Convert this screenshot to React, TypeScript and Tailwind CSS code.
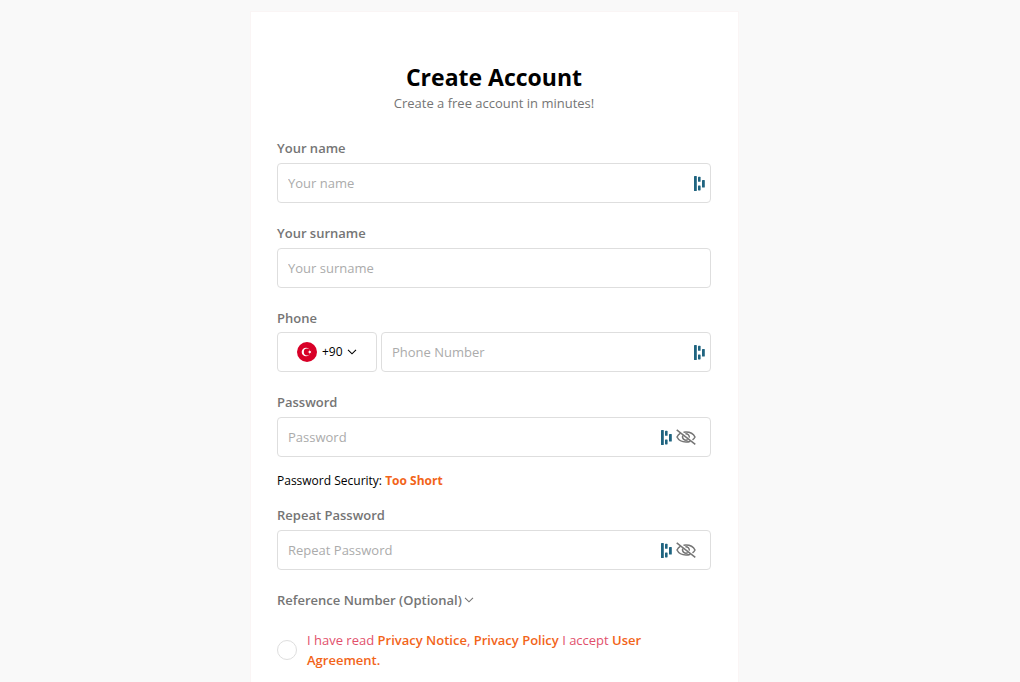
import { useState, type ReactNode } from 'react'

interface FieldProps {
  id: string
  label: string
  type?: string
  children?: ReactNode
}

const inputClass =
  'h-10 w-full min-w-0 rounded border border-[#dedede] bg-white px-[10px] text-[13px] text-black placeholder:text-[#ababab] outline-none focus:border-gray-400'
const labelClass = 'block text-[13px] leading-5 font-semibold text-[#757575]'

function ManagerIcon() {
  return (
    <svg width="11" height="15" viewBox="0 0 11 15" fill="#1f6480" aria-hidden="true">
      <rect x="0" y="0" width="2.8" height="15" rx="0.6" />
      <rect x="4" y="0.8" width="2.6" height="5" rx="0.6" />
      <rect x="4" y="9.4" width="2.6" height="5" rx="0.6" />
      <rect x="8" y="4" width="2.8" height="7.5" rx="0.6" />
    </svg>
  )
}

function EyeOffIcon() {
  return (
    <svg width="20" height="16" viewBox="0 0 20 16" fill="none" stroke="#757575" strokeWidth="1.5" aria-hidden="true">
      <path d="M4.6 4.2C3 5.1 1.7 6.600 1 8c1.600 3.200 5 5 9 5 1.600 0 3.100-.3 4.400-.8M7.500 3.200c.8-.1 1.600-.2 2.500-.2 4 0 7.400 1.800 9 5-.6 1.200-1.400 2.100-2.500 2.900" />
      <path d="M6.800 6.400A3.500 3.500 0 0 0 11.800 10.700M9.400 4.700A3.500 3.500 0 0 1 13.300 8.700" />
      <path d="M.7 .8 19.300 15.400" />
    </svg>
  )
}

function ChevronIcon() {
  return (
    <svg width="10" height="6" viewBox="0 0 10 6" fill="none" stroke="currentColor" strokeWidth="1.1" aria-hidden="true">
      <path d="M1 .8 5 4.800 9 .8" />
    </svg>
  )
}

function TurkeyFlag() {
  return (
    <svg width="20" height="20" viewBox="0 0 20 20" aria-hidden="true">
      <circle cx="10" cy="10" r="10" fill="#d80027" />
      <circle cx="9" cy="10" r="4.3" fill="#fff" />
      <circle cx="10.2" cy="10" r="3.4" fill="#d80027" />
      <path fill="#fff" d="m12 8.100.9 1.200 1.500-.5-.9 1.200.9 1.300-1.500-.5-.9 1.200v-1.500l-1.500-.5 1.500-.5z" />
    </svg>
  )
}

function Field({ id, label, type = 'text', children }: FieldProps) {
  return (
    <div>
      <label htmlFor={id} className={labelClass}>{label}</label>
      <div className="relative mt-[5px]">
        <input id={id} type={type} placeholder={label} className={inputClass} />
        {children}
      </div>
    </div>
  )
}

function PasswordField({ id, label }: FieldProps) {
  const [visible, setVisible] = useState(false)

  return (
    <Field id={id} label={label} type={visible ? 'text' : 'password'}>
      <div className="absolute inset-y-0 right-[15px] flex items-center gap-1">
        <ManagerIcon />
        <button type="button" aria-label="Toggle password visibility" onClick={() => setVisible(!visible)}>
          <EyeOffIcon />
        </button>
      </div>
    </Field>
  )
}

export default function App() {
  const [showReference, setShowReference] = useState(false)

  return (
    <div className="flex min-h-screen justify-center bg-[#f9f9f9] pt-[11px] pr-[31px] font-['Open_Sans',sans-serif]">
      <main className="w-full max-w-[489px] border border-b-0 border-[#faf5f5] bg-white pt-[49px] pr-[27px] pl-[26px]">
        <header className="text-center">
          <h1 className="text-[23px] leading-8 font-bold text-black">Create Account</h1>
          <p className="text-[13px] leading-5 text-[#757575]">Create a free account in minutes!</p>
        </header>

        <form className="mt-[25px]" onSubmit={(e) => e.preventDefault()}>
          <div className="flex flex-col gap-5">
            <Field id="name" label="Your name">
              <div className="absolute inset-y-0 right-[6px] flex items-center">
                <ManagerIcon />
              </div>
            </Field>

            <Field id="surname" label="Your surname" />

            <div>
              <label htmlFor="phone" className={labelClass}>Phone</label>
              <div className="mt-1 flex gap-1">
                <div className="flex h-10 w-[100px] shrink-0 items-center justify-center rounded border border-[#dedede] text-black">
                  <TurkeyFlag />
                  <select aria-label="Country code" className="ml-[5px] appearance-none bg-transparent text-[12px] outline-none">
                    <option>+90</option>
                  </select>
                  <span className="ml-1"><ChevronIcon /></span>
                </div>
                <div className="relative flex-1">
                  <input id="phone" type="tel" placeholder="Phone Number" className={inputClass} />
                  <div className="absolute inset-y-0 right-[6px] flex items-center">
                    <ManagerIcon />
                  </div>
                </div>
              </div>
            </div>

            <PasswordField id="password" label="Password" />
          </div>

          <p className="my-[14px] text-[12px] leading-5 text-black">
            Password Security: <strong className="font-bold text-[#f26419]">Too Short</strong>
          </p>

          <PasswordField id="repeat-password" label="Repeat Password" />

          <button
            type="button"
            aria-expanded={showReference}
            onClick={() => setShowReference(!showReference)}
            className="mt-5 flex items-center gap-[2px] text-[13px] leading-5 font-semibold text-[#757575]"
          >
            Reference Number (Optional)
            <ChevronIcon />
          </button>
          {showReference && <input aria-label="Reference Number" className={inputClass} />}

          <div className="mt-5 flex items-center gap-[10px]">
            <input
              id="terms"
              type="checkbox"
              className="size-5 shrink-0 appearance-none rounded-full border border-[#dedede] checked:bg-[#f26419]"
            />
            <label htmlFor="terms" className="max-w-[350px] text-[13px] leading-5 text-[#e2506c]">
              I have read <a href="#notice" className="font-semibold text-[#f26419]">Privacy Notice</a>,{' '}
              <a href="#policy" className="font-semibold text-[#f26419]">Privacy Policy</a> I accept{' '}
              <a href="#agreement" className="font-semibold text-[#f26419]">User Agreement.</a>
            </label>
          </div>
        </form>
      </main>
    </div>
  )
}
